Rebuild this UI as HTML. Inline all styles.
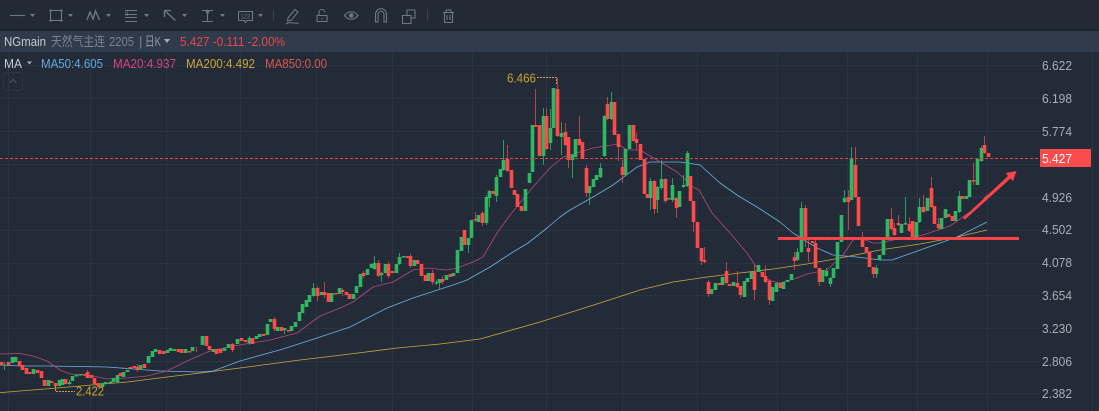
<!DOCTYPE html>
<html><head><meta charset="utf-8"><style>
html,body{margin:0;padding:0;background:#232b38;width:1099px;height:411px;overflow:hidden}
svg{display:block}
text{font-family:"Liberation Sans","Noto Sans CJK SC",sans-serif}
</style></head><body>
<svg width="1099" height="411" viewBox="0 0 1099 411" xmlns="http://www.w3.org/2000/svg">
<rect width="1099" height="411" fill="#232b38"/>
<!-- grid -->
<path stroke="#2b3541" stroke-width="1" fill="none" d="M0 65.5H1040M0 98.5H1040M0 131.5H1040M0 164.5H1040M0 197.5H1040M0 230.5H1040M0 263.5H1040M0 295.5H1040M0 328.5H1040M0 361.5H1040M0 393.5H1040M8.5 52V411M90.5 52V411M166.5 52V411M240.5 52V411M316.5 52V411M392.5 52V411M472.5 52V411M546.5 52V411M622.5 52V411M697.5 52V411M777.5 52V411M847.5 52V411M917.5 52V411M987.5 52V411M1092.5 52V411"/>
<!-- toolbar -->
<rect width="1099" height="30" fill="#232a35"/>
<rect y="29" width="1099" height="2" fill="#1c222c"/>
<rect y="31" width="1099" height="21" fill="#2f3b4b"/>
<g fill="none" stroke="#6f7883" stroke-width="1.1">
<path d="M10 15.5H25"/>
<path d="M50.5 10.5H61.5V20.5H50.5Z"/>
<path d="M87 20L90 12L93 19L95.5 11L99.5 20" stroke-width="1.4"/>
<path d="M125 10.5H137M125 14.5H137M125 17.5H137M125 21.5H137" />
<path d="M164.5 10.5L175.5 20.5M164.5 10.5H171M164.5 10.5V17" stroke-width="1.3"/>
<path d="M202 10.5H213M202 21.5H213M207.5 10.5V21.5"/>
<path d="M238.5 11.5H252.5V20.5H247L245.5 22.5L244 20.5H238.5Z"/>
<path d="M273.5 9V21M427.5 9V21" stroke="#3a434f"/>
<path d="M288 18L295 9.5L298 12L291 20.5L287.5 21ZM286 24C290 21 293 24 299 23" />
<path d="M317 15.5H327V21.5H317ZM319 15.5V12.5C319 8.5 325 8.500 325 12.500M322 18V19.500" />
<path d="M344.500 15.500C348 10.500 354 10.500 358 15.500C354 20.500 348 20.500 344.500 15.500Z"/>
<path d="M375.500 22V15C375.500 6.500 386.500 6.500 386.500 15V22H384V15C384 10 378 10 378 15V22Z"/>
<path d="M402.500 15.500H411V23.500H402.500ZM407 15.500V10H415V18H411"/>
<path d="M443 12.500H454M446 12.500V10H451V12.500M444.500 12.500V22.500H452.500V12.500M447 15V20M450 15V20"/>
</g>
<path fill="#6f7883" d="M349 15.500a2.300 2.300 0 1 0 4.600 0a2.300 2.300 0 1 0-4.600 0M49.500 9.500h2v2h-2zM60.500 9.500h2v2h-2zM49.500 19.500h2v2h-2zM60.500 19.500h2v2h-2zM205.500 11l2-1.500 2 1.500-1 2.500h-2z"/>
<path fill="#747c87" d="M30 14h5l-2.500 3zM68 14h5l-2.500 3zM106 14h5l-2.500 3zM144 14h5l-2.500 3zM182 14h5l-2.500 3zM220 14h5l-2.500 3zM258 14h5l-2.500 3z"/>
<text x="240.500" y="18.500" font-size="6.500" fill="#6f7883" textLength="9.500" lengthAdjust="spacingAndGlyphs">123</text>
<text x="125" y="16" font-size="6" fill="#6f7883">9</text>
<!-- header -->
<g font-size="13">
<text x="4" y="46" fill="#c4c9cf" textLength="42" lengthAdjust="spacingAndGlyphs">NGmain</text>
<text x="51" y="46" fill="#78838f" textLength="54" lengthAdjust="spacingAndGlyphs">天然气主连</text>
<text x="109" y="46" fill="#78838f" textLength="25" lengthAdjust="spacingAndGlyphs">2205</text>
<text x="139" y="46" fill="#78838f">|</text>
<text x="145" y="46" fill="#8e98a3" textLength="16" lengthAdjust="spacingAndGlyphs">日K</text>
<text x="180" y="46" fill="#e8474d" textLength="105" lengthAdjust="spacingAndGlyphs">5.427 -0.111 -2.00%</text>
<text x="4" y="68" fill="#c4c9cf" textLength="18" lengthAdjust="spacingAndGlyphs">MA</text>
<text x="41" y="68" fill="#62a9dc" textLength="62" lengthAdjust="spacingAndGlyphs">MA50:4.605</text>
<text x="113" y="68" fill="#d8437e" textLength="63" lengthAdjust="spacingAndGlyphs">MA20:4.937</text>
<text x="186" y="68" fill="#c9a53a" textLength="69" lengthAdjust="spacingAndGlyphs">MA200:4.492</text>
<text x="265" y="68" fill="#d9574f" textLength="62" lengthAdjust="spacingAndGlyphs">MA850:0.00</text>
</g>
<path fill="#a6adb5" d="M164 39h6l-3 4zM27 61.500h5l-2.500 3z"/>
<rect x="3.500" y="72.500" width="19" height="18" rx="3" fill="none" stroke="#2d3642"/>
<path d="M9.500 83L13 79.500L16.500 83" fill="none" stroke="#4a5460" stroke-width="1.200"/>
<!-- MAs -->
<g fill="none" stroke-width=".8" stroke-linejoin="round">
<path stroke="#c9a83f" d="M0 392.600L57 388L127 382L167 377L200 373L240 368L300 360L350 354L397 348L440 344L480 339L540 322L600 303L640 290L673 282L707 277L740 273L773 269L807 264L840 258L880 250L920 244L957 237L987 230"/>
<path stroke="#6fb2e0" d="M0 365L20 366L50 366L107 367L160 371L200 372L213 371L240 361L283 349L317 338L350 327L387 308L413 298L453 285L467 280L490 267L513 252L528 243L547 228L560 217L570 210L593 197L613 185L637 167L650 162L680 162L700 165L720 183L740 197L757 207L780 222L793 233L817 248L833 255L857 257L880 260L892 260L957 237L987 222"/>
<path stroke="#b34a78" d="M0 354L20 353.500L33 356L47 361L60 370L70 374L93 376L107 379L127 378L147 376L167 371L187 361L210 351L233 346L270 340L297 333L320 316L340 308L353 302L373 287L393 282L413 270L427 268L447 270L457 268L473 262L483 257L497 233L510 215L533 187L550 168L563 157L593 148L618 144L627 150L640 150L657 160L677 172L693 187L699 190L712 213L730 233L747 253L757 268L768 280L780 283L797 278L807 274L827 270L843 255L853 240L860 238L873 243L880 243L893 240L923 235L950 226L963 217L977 207L987 195"/>
</g>
<!-- wicks -->
<g fill="none" stroke-width="1" opacity=".75">
<path stroke="#f04a4c" d="M55.500 383V391M87.500 370V378M137.500 364V372M196.500 347V352M232.500 343V352M274.500 317V331M317.500 286V301M324.500 282V298M342.500 288V296M363.500 271V278M378.500 260V277M388.500 262V278M410.500 254V268M432.500 270V285M442.500 276V284M475.500 212V222M482.500 211V226M507.500 145V172M535.500 89V127M546.500 108V150M557.500 78V137M565.500 123V146M568.500 137V168M579.500 116V146M586.500 165V197M607.500 97V120M618.500 134V161M622.500 160V183M636.500 133V150M654.500 180V214M665.500 178V203M676.500 197V218M693.500 201V232M701.500 248V265M704.500 247V263M708.500 280V297M726.500 262V284M737.500 271V288M740.500 286V298M754.500 265V300M765.500 265V283M769.500 279V305M794.500 252V270M805.500 205V247M808.500 240V262M815.500 240V268M819.500 268V286M848.500 190V230M855.500 147V198M862.500 232V247M873.500 267V278M891.500 208V230M894.500 223V236M898.500 215V226M909.500 217V232M923.500 195V213M931.500 177V208M938.500 218V230M973.500 163V185M984.500 136V154"/>
<path stroke="#2fbf66" d="M4.500 362V370M69.500 380V385M249.500 336V345M284.500 328V334M313.500 283V297M374.500 256V270M381.500 272V282M399.500 253V265M436.500 280V285M439.500 279V289M468.500 238V253M486.500 195V225M489.500 190V207M496.500 175V202M503.500 140V171M543.500 108V165M550.500 109V150M561.500 122V155M572.500 154V178M589.500 186V205M600.500 163V178M604.500 115V157M611.500 92V120M650.500 178V210M657.500 186V213M661.500 160V190M672.500 178V202M683.500 175V188M687.500 151V187M797.500 248V261M801.500 202V253M826.500 268V277M830.500 277V287M844.500 190V203M851.500 147V200M876.500 265V278M905.500 197V225M919.500 198V223M959.500 191V213M981.500 146V162"/>
</g>
<!-- green bodies -->
<path fill="none" stroke="#2fb862" stroke-width="3.6" d="M12.500 357V363M15.500 357V362M33.500 369V374M48.500 380V386M59.500 380V386M62.500 379V385M69.500 382V384M72.500 376V381M76.500 375V376.500M80.500 374V375.500M102.500 383V387M105.500 382V384M110.500 381.500V383M113.500 378V382M117.500 375V382M123.500 372V377M127.500 370V372M140.500 365V370M148.500 356V363M152.500 351V357M155.500 349V352M167.500 350V353M170.500 348V351M174.500 349V351M185.500 349V353M192.500 347V351M202.500 336V345M213.500 349V352M224.500 348V351M228.500 344V348M237.500 339V344M249.500 338V343M256.500 336V339M259.500 334V337M267.500 324V335M270.500 319V322M277.500 327V331M284.500 328V330M291.500 326V331M295.500 322V327M299.500 312V321M302.500 304V313M306.500 300V307M309.500 295V302M313.500 288V296M321.500 292V295M331.500 293V302M339.500 288V294M353.500 294V299M356.500 286V293M360.500 274V287M367.500 269V275M371.500 264V268M374.500 263V269M381.500 273V275M385.500 264V273M396.500 264V273M399.500 257V264M403.500 256V257.500M414.500 260V266M428.500 273V281M436.500 282V283.500M439.500 279V283M446.500 275V280M453.500 273V276M457.500 250V273M461.500 237V251M468.500 238V245M471.500 220V238M478.500 215V222M486.500 197V223M489.500 191V198M496.500 177V196M500.500 169V177M503.500 160V170M525.500 189V211M529.500 173V183M532.500 125V172M543.500 116V156M550.500 128V143M553.500 88V128M561.500 133V137M572.500 155V160M575.500 139V157M589.500 186V193M593.500 179V187M596.500 175V180M600.500 168V177M604.500 116V156M611.500 102V119M625.500 149V175M629.500 125V149M650.500 181V198M657.500 187V200M661.500 179V188M668.500 198V199.500M672.500 185V200M679.500 191V207M683.500 185V187M687.500 153V186M711.500 289V294M715.500 283V290M722.500 277V285M733.500 282V286M744.500 281V297M747.500 278V282M751.500 272V279M758.500 265V272M772.500 287V301M776.500 283V292M783.500 282V289M787.500 280V282M791.500 274V280M797.500 252V260M801.500 208V252M822.500 270V282M826.500 271V276M830.500 278V284M833.500 268V278M837.500 242V269M841.500 215V242M844.500 198V202M851.500 158V200M876.500 268V274M879.500 255V260M883.500 240V255M887.500 219V238M901.500 224V233M905.500 223V224.500M916.500 222V238M919.500 207V222M927.500 198V211M941.500 218V229M945.500 209V218M955.500 211V221M959.500 196V212M966.500 196V199M969.500 180V197M977.500 159V185M981.500 148V161"/>
<!-- red bodies -->
<path fill="none" stroke="#ff4a4a" stroke-width="3.6" d="M1.500 362V365M8.500 362V365M19.500 361V366M22.500 365V370M26.500 368V374M29.500 372V374M37.500 370V373M41.500 371V378M44.500 380V386M51.500 381V383M55.500 383V386M65.500 379V384M84.500 374V375.500M87.500 372V378M91.500 375V378M94.500 378V384M98.500 383V387M120.500 373V376M130.500 367V368.500M134.500 366V368M137.500 367V370M144.500 364V368M159.500 350V354M163.500 351V354M178.500 349V352M181.500 349V353M189.500 351V352.500M206.500 336V346M209.500 346V350M216.500 349V354M220.500 349V353M232.500 344V350M241.500 338V341M245.500 340V342M252.500 338V344M263.500 334V336M274.500 319V329M281.500 327V331M288.500 330V331.500M317.500 288V296M324.500 292V295M328.500 293V302M335.500 293V294.500M342.500 290V292M346.500 292V295M349.500 294V299M363.500 273V276M378.500 263V276M388.500 264V276M392.500 271V273M407.500 256V258M410.500 256V266M417.500 260V264M421.500 264V276M425.500 275V281M432.500 273V282M442.500 279V282M450.500 274V277M464.500 230V245M475.500 219V220.500M482.500 213V223M493.500 191V194M507.500 159V171M511.500 170V188M514.500 190V195M517.500 194V207M521.500 206V211M535.500 125V127M539.500 125V156M546.500 116V149M557.500 89V136M565.500 132V145M568.500 137V160M579.500 139V145M582.500 142V159M586.500 168V193M607.500 104V119M614.500 102V135M618.500 134V147M622.500 167V175M633.500 125V141M636.500 139V143M640.500 144V160M644.500 159V194M647.500 194V198M654.500 181V209M665.500 179V201M676.500 198V208M690.500 176V201M693.500 201V222M697.500 222V248M701.500 248V261M704.500 260V262M708.500 282V294M719.500 283V285M726.500 271V283M729.500 284V286M737.500 283V287M740.500 286V295M754.500 272V290M762.500 272V277M765.500 276V282M769.500 281V300M780.500 283V288M794.500 257V261M805.500 208V240M808.500 248V252M812.500 241V243M815.500 243V268M819.500 268V282M848.500 197V202M855.500 165V197M858.500 197V226M862.500 238V247M866.500 247V253M869.500 252V267M873.500 267V274M891.500 219V229M894.500 228V235M898.500 223V225M909.500 224V231M912.500 221V238M923.500 207V212M931.500 188V207M934.500 206V224M938.500 224V228M948.500 214V217M952.500 216V221M962.500 196V199M973.500 180V181.500M984.500 145V153M988.500 153V157"/>
<!-- price line -->
<path d="M0 158.500H1040" stroke="#d8474c" stroke-width="1" stroke-dasharray="3 2"/>
<!-- drawings -->
<rect x="778" y="237" width="241" height="3" fill="#fb4349"/>
<path fill="#fb4349" d="M963 218L1008 176L1006 173L1016.500 171L1013 181L1010.500 178.500L965 219.500Z"/>
<!-- extremes -->
<path d="M537 77.500H556.500V84" fill="none" stroke="#c9a22a" stroke-dasharray="2 1"/>
<text x="507" y="82.500" font-size="13" fill="#c9a22a" textLength="29" lengthAdjust="spacingAndGlyphs">6.466</text>
<path d="M55.500 386V391.500H75" fill="none" stroke="#c9a22a" stroke-dasharray="2 1"/>
<text x="76" y="395.500" font-size="13" fill="#c9a22a" textLength="28" lengthAdjust="spacingAndGlyphs">2.422</text>
<!-- axis -->
<g font-size="13" fill="#a9aeb4">
<text x="1042" y="70" textLength="30" lengthAdjust="spacingAndGlyphs">6.622</text>
<text x="1042" y="103" textLength="30" lengthAdjust="spacingAndGlyphs">6.198</text>
<text x="1042" y="136" textLength="30" lengthAdjust="spacingAndGlyphs">5.774</text>
<text x="1042" y="202" textLength="30" lengthAdjust="spacingAndGlyphs">4.926</text>
<text x="1042" y="234" textLength="30" lengthAdjust="spacingAndGlyphs">4.502</text>
<text x="1042" y="267" textLength="30" lengthAdjust="spacingAndGlyphs">4.078</text>
<text x="1042" y="300" textLength="30" lengthAdjust="spacingAndGlyphs">3.654</text>
<text x="1042" y="333" textLength="30" lengthAdjust="spacingAndGlyphs">3.230</text>
<text x="1042" y="366" textLength="30" lengthAdjust="spacingAndGlyphs">2.806</text>
<text x="1042" y="398" textLength="30" lengthAdjust="spacingAndGlyphs">2.382</text>
</g>
<rect x="1040" y="149" width="51" height="18" fill="#fb4b4c"/>
<text x="1042" y="163" font-size="13" fill="#ffffff" textLength="30" lengthAdjust="spacingAndGlyphs">5.427</text>
</svg>
</body></html>
